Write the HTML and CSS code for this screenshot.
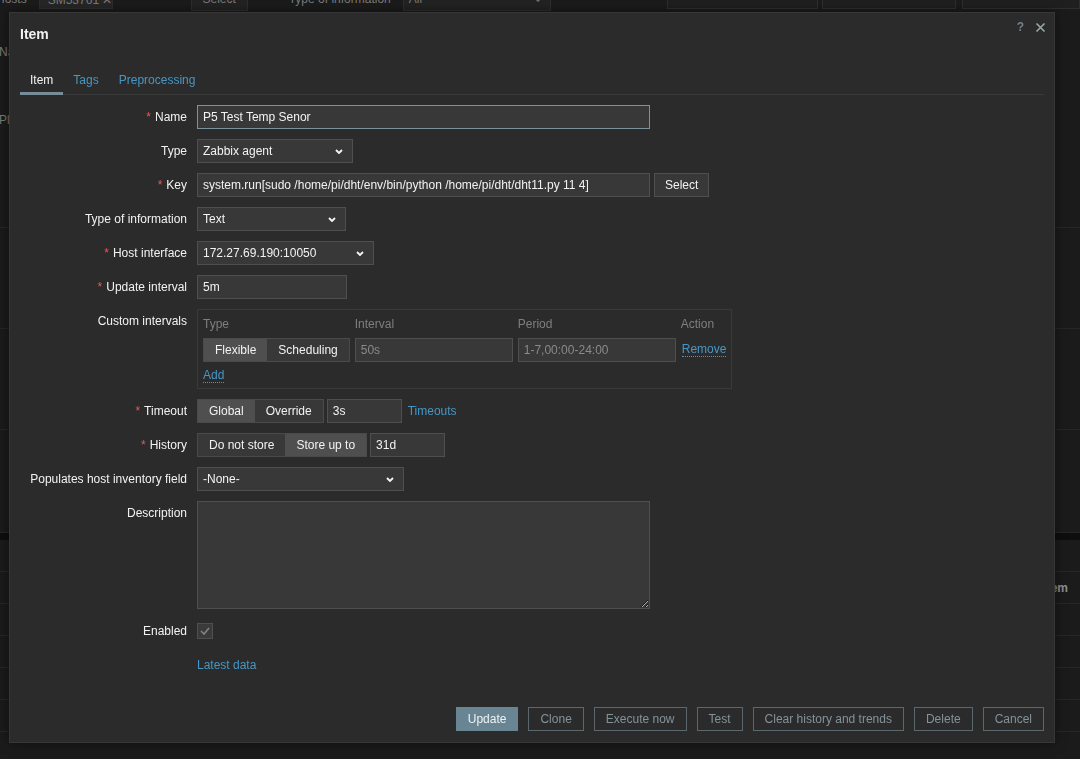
FILE: index.html
```html
<!DOCTYPE html>
<html lang="en">
<head>
    <meta charset="UTF-8">
    <meta name="viewport" content="width=device-width, initial-scale=1.0">
    <title>Item</title>
    <link rel="stylesheet" href="styles.css">
</head>
<body>

<!-- Page behind the dialog (dimmed) -->
<div class="page">
    <div class="filter-bar">
        <span class="bg-label">Hosts</span>
        <span class="bg-chip">SM53761 &#10005;</span>
        <span class="bg-btn">Select</span>
        <span class="bg-label bg-type">Type of information</span>
        <span class="bg-select">All
            <svg width="8" height="5" viewBox="0 0 8 5"><polyline points="1,1 4,4 7,1" fill="none" stroke="#6d6d6d" stroke-width="1.6"/></svg>
        </span>
        <span class="bg-spacer"></span>
        <span class="bg-box box-a"></span>
        <span class="bg-box box-b"></span>
        <span class="bg-box box-c"></span>
    </div>
    <div class="bg-field first">Name</div>
    <div class="bg-field second">Plugins</div>
    <div class="bg-list">
        <div class="bg-row tall"></div>
        <div class="bg-row tall"></div>
        <div class="bg-row tall"></div>
        <div class="bg-row short"></div>
        <div class="bg-band"></div>
        <div class="bg-row head"></div>
        <div class="bg-row"><span class="bg-cell">Item</span></div>
        <div class="bg-row"></div>
        <div class="bg-row"></div>
        <div class="bg-row"></div>
        <div class="bg-row"></div>
    </div>
</div>

<!-- Dialog -->
<div class="dialog">
    <div class="dialog-head">
        <h4 class="dialog-title">Item</h4>
        <div class="dialog-controls">
            <span class="help-btn">?</span>
            <svg class="close-btn" width="11" height="11" viewBox="0 0 11 11"><path d="M1.5 1.5 L9.5 9.5 M9.5 1.5 L1.5 9.5" stroke="#9aa3a8" stroke-width="1.7" fill="none"/></svg>
        </div>
    </div>

    <div class="dialog-body">
        <ul class="tabs">
            <li class="tab active">Item</li>
            <li class="tab">Tags</li>
            <li class="tab">Preprocessing</li>
        </ul>

        <div class="form-grid">
            <label class="form-label required">Name</label>
            <div class="form-field"><input class="input w-wide focused" type="text" value="P5 Test Temp Senor"></div>

            <label class="form-label">Type</label>
            <div class="form-field">
                <div class="select w-type"><span>Zabbix agent</span>
                    <svg width="8" height="5" viewBox="0 0 8 5"><polyline points="1,1 4,4 7,1" fill="none" stroke="#f2f2f2" stroke-width="1.9"/></svg>
                </div>
            </div>

            <label class="form-label required">Key</label>
            <div class="form-field">
                <input class="input w-wide" type="text" value="system.run[sudo /home/pi/dht/env/bin/python /home/pi/dht/dht11.py 11 4]">
                <button class="btn-grey">Select</button>
            </div>

            <label class="form-label">Type of information</label>
            <div class="form-field">
                <div class="select w-info"><span>Text</span>
                    <svg width="8" height="5" viewBox="0 0 8 5"><polyline points="1,1 4,4 7,1" fill="none" stroke="#f2f2f2" stroke-width="1.9"/></svg>
                </div>
            </div>

            <label class="form-label required">Host interface</label>
            <div class="form-field">
                <div class="select w-iface"><span>172.27.69.190:10050</span>
                    <svg width="8" height="5" viewBox="0 0 8 5"><polyline points="1,1 4,4 7,1" fill="none" stroke="#f2f2f2" stroke-width="1.9"/></svg>
                </div>
            </div>

            <label class="form-label required">Update interval</label>
            <div class="form-field"><input class="input w-interval" type="text" value="5m"></div>

            <label class="form-label top-label">Custom intervals</label>
            <div class="form-field">
                <div class="intervals">
                    <div class="intervals-grid">
                        <span class="col-head">Type</span>
                        <span class="col-head">Interval</span>
                        <span class="col-head">Period</span>
                        <span class="col-head">Action</span>

                        <div class="segment">
                            <span class="seg-item selected">Flexible</span>
                            <span class="seg-item">Scheduling</span>
                        </div>
                        <input class="input dim w-col" type="text" value="50s">
                        <input class="input dim w-col" type="text" value="1-7,00:00-24:00">
                        <a class="link dotted">Remove</a>
                    </div>
                    <a class="link dotted add-link">Add</a>
                </div>
            </div>

            <label class="form-label required">Timeout</label>
            <div class="form-field">
                <div class="segment">
                    <span class="seg-item selected">Global</span>
                    <span class="seg-item">Override</span>
                </div>
                <input class="input w-small" type="text" value="3s">
                <a class="link">Timeouts</a>
            </div>

            <label class="form-label required">History</label>
            <div class="form-field">
                <div class="segment">
                    <span class="seg-item">Do not store</span>
                    <span class="seg-item selected">Store up to</span>
                </div>
                <input class="input w-small" type="text" value="31d">
            </div>

            <label class="form-label">Populates host inventory field</label>
            <div class="form-field">
                <div class="select w-inventory"><span>-None-</span>
                    <svg width="8" height="5" viewBox="0 0 8 5"><polyline points="1,1 4,4 7,1" fill="none" stroke="#f2f2f2" stroke-width="1.9"/></svg>
                </div>
            </div>

            <label class="form-label top-label">Description</label>
            <div class="form-field"><textarea class="textarea w-wide"></textarea></div>

            <label class="form-label">Enabled</label>
            <div class="form-field">
                <span class="checkbox">
                    <svg width="10" height="8" viewBox="0 0 10 8"><polyline points="1,4 4,7 9,1" fill="none" stroke="#858585" stroke-width="1.6"/></svg>
                </span>
            </div>

            <span class="form-label"></span>
            <div class="form-field"><a class="link">Latest data</a></div>
        </div>
    </div>

    <div class="dialog-foot">
        <button class="btn-main">Update</button>
        <button class="btn-alt">Clone</button>
        <button class="btn-alt">Execute now</button>
        <button class="btn-alt">Test</button>
        <button class="btn-alt">Clear history and trends</button>
        <button class="btn-alt">Delete</button>
        <button class="btn-alt">Cancel</button>
    </div>
</div>

</body>
</html>
```

FILE: styles.css
```css
/* Base */
html, body {
    margin: 0;
    height: 759px;
    overflow: hidden;
}

body {
    background: #1b1b1b;
    color: #f2f2f2;
    font-family: "Liberation Sans", Arial, sans-serif;
    font-size: 12px;
    color-scheme: dark;
}

/* Dimmed page behind the dialog */
.page {
    color: #7a7a7a;
}

.filter-bar {
    display: flex;
    align-items: center;
    height: 22px;
    margin-top: -12px;
}

.bg-label {
    margin-left: -4px;
    white-space: nowrap;
}

.bg-type {
    margin-left: 41px;
}

.bg-chip {
    margin-left: 12px;
    width: 74px;
    height: 20px;
    line-height: 20px;
    padding: 0 8px;
    box-sizing: border-box;
    border: 1px solid #2e2e2e;
    background: #262626;
    white-space: nowrap;
}

.bg-btn {
    margin-left: 78px;
    width: 57px;
    height: 24px;
    line-height: 22px;
    text-align: center;
    box-sizing: border-box;
    border: 1px solid #2e2e2e;
    background: #222;
}

.bg-select {
    margin-left: 12px;
    width: 148px;
    height: 24px;
    box-sizing: border-box;
    padding: 0 8px 0 5px;
    display: flex;
    align-items: center;
    justify-content: space-between;
    border: 1px solid #2e2e2e;
    background: #222;
}

.bg-spacer {
    flex: 1;
}

.bg-box {
    height: 20px;
    box-sizing: border-box;
    border: 1px solid #2e2e2e;
    background: #1f1f1f;
}

.box-a { width: 151px; }
.box-b { width: 134px; margin-left: 4px; }
.box-c { width: 118px; margin-left: 6px; }

.bg-field {
    line-height: 14px;
    white-space: nowrap;
    margin-left: -1px;
}

.bg-field.first { margin-top: 35px; }
.bg-field.second { margin-top: 54px; }

.bg-row {
    height: 31px;
    border-bottom: 1px solid #262626;
    display: flex;
    align-items: center;
    justify-content: flex-end;
}

.bg-row.tall { height: 100px; }
.bg-row.short { height: 102px; }
.bg-row.head { height: 31px; }

.bg-band {
    height: 7px;
    background: #0e0e0e;
}

.bg-cell {
    padding-right: 12px;
    color: #8c8c8c;
    font-weight: bold;
}

/* Dialog */
.dialog {
    position: fixed;
    left: 9px;
    top: 12px;
    width: 1046px;
    height: 731px;
    box-sizing: border-box;
    background: #2b2b2b;
    border: 1px solid #373737;
    box-shadow: 0 0 10px rgba(0, 0, 0, 0.5);
    display: flex;
    flex-direction: column;
}

.dialog-head {
    padding: 12px 10px 0;
}

.dialog-title {
    margin: 0;
    font-size: 14px;
    line-height: 18px;
    font-weight: bold;
    color: #f2f2f2;
}

.dialog-controls {
    position: absolute;
    top: 7px;
    right: 8px;
    display: flex;
    align-items: center;
    gap: 11px;
}

.help-btn {
    color: #778187;
    font-size: 12px;
    font-weight: bold;
}

.dialog-body {
    flex: 1;
    padding: 0 10px;
}

/* Tabs */
.tabs {
    display: flex;
    list-style: none;
    margin: 20px 0 0;
    padding: 0;
    border-bottom: 1px solid #3a3a3a;
}

.tab {
    padding: 10px 10px 5px;
    line-height: 14px;
    color: #4796c4;
    border-bottom: 3px solid transparent;
    margin-bottom: -1px;
}

.tab.active {
    color: #f2f2f2;
    border-bottom-color: #768d99;
}

/* Form */
.form-grid {
    display: grid;
    grid-template-columns: 167px 1fr;
    column-gap: 10px;
    row-gap: 10px;
    align-items: center;
    padding-top: 10px;
}

.form-label {
    text-align: right;
    color: #f2f2f2;
    line-height: 14px;
    white-space: nowrap;
}

.form-label.required::before {
    content: "*";
    color: #e45959;
    margin-right: 4px;
}

.form-label.top-label {
    align-self: start;
    padding-top: 5px;
}

.form-field {
    display: flex;
    align-items: center;
    min-height: 24px;
}

.input {
    height: 24px;
    box-sizing: border-box;
    padding: 0 5px;
    background: #383838;
    border: 1px solid #4f4f4f;
    color: #f2f2f2;
    font-family: inherit;
    font-size: 12px;
    outline: none;
}

.input.focused {
    border-color: #7d919b;
}

.input.dim {
    color: #8a8a8a;
}

.w-wide { width: 453px; }
.w-interval { width: 150px; }
.w-small { width: 75px; margin-left: 3px; }
.w-col { width: 158px; }

.select {
    height: 24px;
    box-sizing: border-box;
    padding: 0 9px 0 5px;
    display: flex;
    align-items: center;
    justify-content: space-between;
    background: #383838;
    border: 1px solid #4f4f4f;
    color: #f2f2f2;
}

.w-type { width: 156px; }
.w-info { width: 149px; }
.w-iface { width: 177px; }
.w-inventory { width: 207px; }

.btn-grey {
    height: 24px;
    margin-left: 4px;
    padding: 0 10px;
    background: #383838;
    border: 1px solid #4f4f4f;
    color: #f2f2f2;
    font-family: inherit;
    font-size: 12px;
}

.textarea {
    height: 108px;
    box-sizing: border-box;
    background: #383838;
    border: 1px solid #4f4f4f;
    color: #f2f2f2;
    font-family: inherit;
    font-size: 12px;
    padding: 4px 5px;
    margin: 0;
    display: block;
}

/* Segmented radio buttons */
.segment {
    display: inline-flex;
    border: 1px solid #4a4a4a;
    height: 24px;
    box-sizing: border-box;
}

.seg-item {
    padding: 0 11px;
    line-height: 22px;
    background: #383838;
    color: #f2f2f2;
    white-space: nowrap;
}

.seg-item.selected {
    background: #4f4f4f;
}

/* Custom intervals table */
.intervals {
    width: 535px;
    box-sizing: border-box;
    border: 1px solid #3a3a3a;
    padding: 6px 5px 5px;
}

.intervals-grid {
    display: grid;
    grid-template-columns: auto 158px 158px auto;
    column-gap: 5px;
    row-gap: 6px;
    align-items: center;
}

.intervals-grid .link {
    margin-left: 1px;
    justify-self: start;
}

.col-head {
    color: #7f7f7f;
    line-height: 16px;
}

.add-link {
    display: inline-block;
    margin-top: 7px;
}

.link {
    color: #4796c4;
    line-height: 14px;
    white-space: nowrap;
    cursor: pointer;
}

.w-small + .link {
    margin-left: 6px;
}

.link.dotted {
    border-bottom: 1px dotted #4796c4;
    line-height: 13px;
}

.checkbox {
    width: 16px;
    height: 16px;
    box-sizing: border-box;
    background: #3a3a3a;
    border: 1px solid #4f4f4f;
    display: flex;
    align-items: center;
    justify-content: center;
}

/* Footer buttons */
.dialog-foot {
    display: flex;
    justify-content: flex-end;
    gap: 10px;
    padding: 0 10px 11px;
}

.dialog-foot button {
    height: 24px;
    padding: 0 11px;
    font-family: inherit;
    font-size: 12px;
    box-sizing: border-box;
}

.btn-main {
    background: #698593;
    border: 1px solid #698593;
    color: #eef2f4;
}

.btn-alt {
    background: transparent;
    border: 1px solid #5b676d;
    color: #84929a;
}
```
